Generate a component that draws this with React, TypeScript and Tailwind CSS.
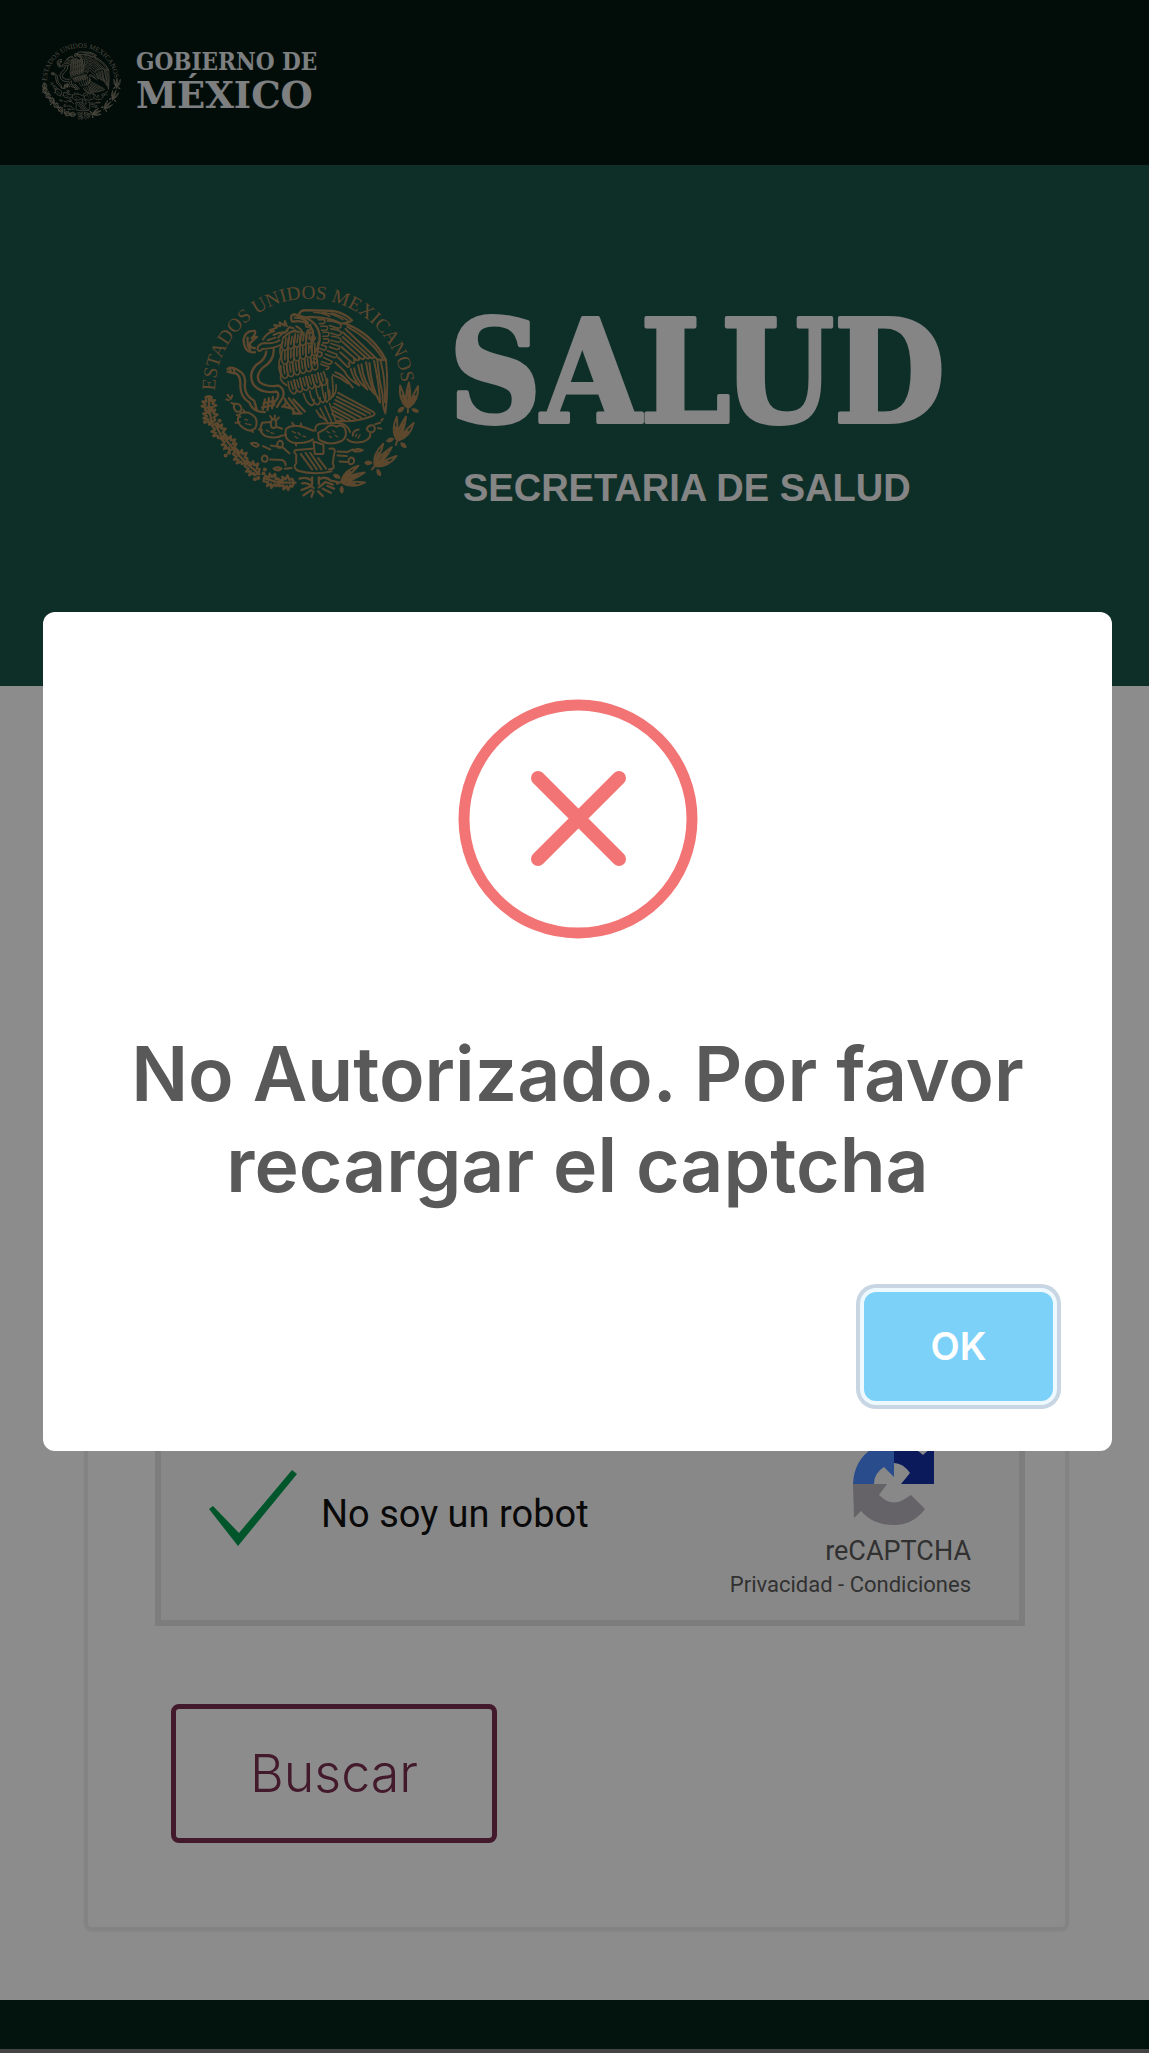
import React from "react";

const LEAF_LEFT: [number, number, number][] = [
  [68, 408, 0], [72, 440, -12], [98, 488, -28], [128, 524, -38], [164, 566, -44],
  [200, 600, -50], [258, 636, -72], [302, 642, -90],
];

const LEAF_RIGHT: [number, number, number][] = [
  [667, 385, 2], [645, 485, 20], [588, 568, 42], [495, 628, 68],
];

/* x start, y start, feather count for each row on the breast */
const BREAST_ROWS: [number, number, number][] = [
  [292, 204, 5], [288, 246, 6], [284, 290, 6], [306, 338, 6],
];

function Emblem({ id, title, className }: { id: string; title: string; className: string }) {
  return (
    <svg viewBox="30 30 680 670" role="img" aria-label={title} className={className} fill="none" stroke="currentColor" strokeLinecap="round" strokeLinejoin="round">
      <path id={id} d="M86 370 A281 281 0 0 1 648 370" stroke="none" />
      <text fill="currentColor" stroke="none" fontSize="58" fontFamily="'Liberation Serif', serif">
        <textPath href={`#${id}`} startOffset="4">ESTADOS UNIDOS MEXICANOS</textPath>
      </text>

      {/* wing outline and shoulder */}
      <g strokeWidth="7">
        <path d="M338 142 Q338 122 362 124 L440 126 Q474 132 498 154 Q484 164 464 164 Q440 150 404 146 L370 144 Q352 148 338 142" />
        <path d="M338 140 Q392 152 400 196 Q404 226 386 250" />
        <path d="M318 158 Q308 138 326 136 L338 140 M318 158 Q366 150 380 186 Q386 220 372 236 M326 146 Q352 146 364 160" />
        <path d="M478 164 Q560 196 600 274 L574 272" />
        <path d="M384 130 Q412 132 430 142 M408 130 Q442 134 470 152 M436 132 Q462 138 484 154" strokeWidth="5" />
      </g>

      {/* covert feathers on the wing */}
      <g strokeWidth="5">
        <path d="M366 162 q-12 4 -6 12 q12 2 14 -8 M376 180 q-14 2 -10 12 q12 4 16 -6 M384 202 q-14 2 -10 12 q12 2 14 -8" />
        <path d="M396 152 h18 q6 8 -2 12 h-12 M404 172 h18 q6 8 -2 12 h-14 M410 190 h16 q6 8 -2 12 h-14 M412 210 h14 q6 8 -2 12 h-14 M406 228 l14 4 q2 10 -6 12 l-14 -6 M394 246 l14 6 q0 10 -8 12 l-12 -8 M382 266 l12 8 q-2 10 -10 10 l-10 -8" />
        <path d="M424 156 q22 0 40 10 q4 10 -8 12 l-26 -8 M434 180 q18 0 30 8 q4 10 -8 12 l-22 -8 M436 202 q16 0 28 8 q2 10 -8 10 l-22 -6 M434 224 l26 8 q2 10 -8 10 l-22 -8 M424 246 l28 10 q2 10 -8 10 l-26 -10 M412 266 l26 12 q0 8 -10 8 l-22 -8 M404 286 l24 8 q0 8 -8 8" />
      </g>

      {/* primary flight feathers */}
      <g strokeWidth="6">
        <path d="M478 180 L574 272 M484 174 Q550 208 590 268 M470 190 L556 268 q8 4 6 -6 M470 204 L542 268 q8 4 8 -6 M468 218 L526 270 q10 4 8 -8 M466 234 L512 274 q10 2 6 -10 M462 250 L498 282 q10 2 6 -10 M456 266 L484 294 q10 2 4 -12 M448 282 L474 306" />
        <path d="M600 276 Q608 350 598 434 Q588 408 590 380 Q578 330 574 276" />
        <path d="M584 278 Q598 330 597 400 M564 276 Q580 350 582 402 Q556 358 550 282 M540 280 Q548 340 566 376 Q532 344 526 286 M516 288 Q524 330 544 362 Q508 334 504 298 M494 300 Q500 326 520 350 Q482 328 476 308 M448 310 Q476 320 500 356 M440 318 Q464 326 486 344" />
      </g>

      {/* breast and body feathers in scalloped rows */}
      <g strokeWidth="5">
        {BREAST_ROWS.map(([x, y, n], r) => (
          <g key={y}>
            {Array.from({ length: n }, (_, c) => (
              <path
                key={c}
                d="M0 0 q-6 28 3 38 q8 5 13 -4 q3 -12 1 -34 M8 2 v24"
                transform={`translate(${x + c * 18} ${y - c * 5}) rotate(${8 - r * 8})`}
              />
            ))}
          </g>
        ))}
        <path d="M290 220 Q276 240 284 262 Q272 290 284 318 Q278 336 302 350" />
        <path d="M352 374 q8 30 24 36 q10 -2 8 -18 M370 366 q8 36 24 42 q10 -4 8 -22 M388 352 q6 42 22 50 q12 -6 8 -30 M406 340 q4 50 16 60 q12 -10 8 -36 M424 330 q0 50 8 62 q12 -14 8 -44 M438 324 q4 40 2 60 q12 -14 10 -36" />
        <path d="M390 424 L404 446 M402 418 L424 460 M416 412 L436 458 M430 404 L450 460 M394 432 L420 456" />
      </g>

      {/* tail */}
      <g strokeWidth="6">
        <path d="M456 372 L556 426 Q572 434 562 440 Q510 462 452 456 M452 384 L552 434 M448 394 L538 440 M444 404 L524 446 M440 414 L508 450 M438 424 L490 452 M438 436 L474 454" />
      </g>

      {/* head and beak */}
      <g strokeWidth="6">
        <path d="M280 214 Q262 226 234 222 Q212 226 214 242 Q220 252 228 240 Q258 240 284 228" />
        <path d="M230 212 Q240 192 264 186 L250 184 L272 176 L264 168 L282 172 L280 160 L294 170 L296 156 L302 172" />
        <path d="M244 214 L268 206 M262 198 Q280 188 296 190 M276 206 Q288 190 304 186 M296 192 L310 174 L322 178 M292 206 Q306 190 328 184 M304 196 Q320 182 340 190 M330 172 Q348 180 352 200" />
      </g>

      {/* serpent */}
      <g strokeWidth="7">
        <path d="M206 186 Q176 184 172 212 Q174 254 206 250 M206 186 Q210 196 196 208 L212 204 L192 222 Q186 236 206 238 M184 206 Q182 234 192 242" />
        <path d="M240 248 Q238 272 210 288 Q184 316 202 348 Q226 376 270 368 Q280 372 274 388 L262 404" />
        <path d="M262 240 Q266 274 230 296 Q206 320 220 340 Q240 356 276 350 Q298 360 290 386 L272 414" />
        <path d="M124 300 Q134 292 152 302 Q180 316 176 344 Q172 378 204 396 L212 424 M124 308 Q136 312 150 314 Q164 324 162 350 Q162 384 190 402 Q200 430 236 430 M130 298 l4 12 M142 298 l2 14" />
        <path d="M236 392 l-6 30 M248 388 l-4 36 M260 384 l-2 34 M232 404 l30 -8 M228 416 l36 -8" />
        <path d="M296 390 Q306 404 288 414 M300 398 L326 432 M308 388 L342 432 M322 392 L356 428 M296 414 L322 420 M320 434 L346 434" />
      </g>

      {/* cactus pads */}
      <g strokeWidth="6">
        <path d="M146 404 q-8 14 4 24 q14 4 16 -8 q-2 -16 -20 -16 M124 378 l6 8 M120 392 l8 2 M138 380 l-4 10 M136 402 l6 4" />
        <path d="M162 434 Q144 460 172 478 Q196 494 208 476 Q220 446 188 432 Q174 428 162 434 M152 438 l10 6 M148 462 l12 -2 M172 424 l4 8 M200 490 l-2 -8" />
        <path d="M228 462 Q214 490 238 502 Q270 512 288 500 M228 462 L252 460 M260 450 q-10 10 -4 26 q12 6 14 -8 q2 -14 -10 -18 M252 442 l4 6 M266 440 v6 M278 446 l-6 6 M270 474 L288 480 M218 482 l10 2" />
        <path d="M300 480 Q290 512 322 522 Q360 526 380 512 M300 480 Q320 464 356 476 L382 486 M318 462 l6 10 M344 464 l2 8 M330 530 l-2 -8 M292 500 l8 -2" />
        <path d="M388 486 Q384 466 408 464 L460 462 Q486 468 492 490 M396 492 L398 512 Q428 534 468 516 Q486 502 476 478 Q464 464 452 474 Q432 462 418 480 L396 492" />
        <path d="M484 512 Q500 526 534 518 Q556 508 552 494 M500 500 Q500 484 518 482 M542 480 q4 12 18 10 q12 -8 2 -20 q-14 -4 -20 10 M568 466 l14 -4 M576 478 l10 2 M590 450 l-4 6" />
        <path d="M176 452 l8 2 M186 466 l8 2 M178 464 l4 2 M240 484 l8 4 M254 492 l8 2 M318 488 l10 4 M336 492 l6 6 M326 504 l8 4 M350 502 l8 2 M422 488 l8 4 M440 486 l6 4 M430 502 l6 4 M448 500 l6 4 M512 496 l-4 8 M522 498 l-6 10" strokeWidth="4" />
      </g>

      {/* stone, water and shells */}
      <g strokeWidth="6">
        <path d="M330 544 L378 540 M410 556 L386 556 L382 518 L412 528 L412 554 M430 540 Q452 536 444 556 L440 584 Q450 602 428 602 M330 544 Q318 546 330 558 L330 584 Q318 596 336 606 M334 606 Q386 620 436 608 M344 556 L378 602 M358 552 L392 602 M372 552 L406 602 M396 568 L420 600" />
        <path d="M194 524 Q210 518 218 530 Q208 540 194 524 M230 532 L252 542 M254 530 L290 536 L310 554 M280 516 q-12 8 -4 20 q14 4 14 -10 q0 -10 -10 -10 M234 560 q-12 6 -4 18 q14 4 14 -8 q0 -10 -10 -10 M252 572 L288 574 Q300 580 298 590 M262 600 Q272 592 286 600 Q276 610 262 600 M296 600 L316 598" />
        <path d="M502 546 Q512 536 530 544 Q516 552 502 546 M454 548 L484 550 L500 542 M454 560 L482 562 M494 566 q-12 8 -4 20 q14 2 14 -10 q0 -10 -10 -10 M460 578 L482 580" />
      </g>

      {/* oak branch */}
      <g strokeWidth="7">
        {LEAF_LEFT.map(([x, y, a], i) => (
          <path
            key={i}
            transform={`translate(${x} ${y}) rotate(${a})`}
            d="M0 26 V-20 M0 22 L-12 16 L-8 10 L-22 4 L-10 0 L-20 -10 L-8 -10 L-10 -24 L0 -26 M0 22 L12 16 L8 8 L22 2 L10 -4 L18 -14 L6 -12 L8 -24 L0 -26"
          />
        ))}
      </g>
      <g fill="currentColor" stroke="none">
        {[[56, 460], [70, 466], [100, 456], [98, 472], [118, 560], [128, 552], [148, 526], [146, 540], [206, 632], [216, 628], [236, 602], [232, 614]].map(([x, y]) => (
          <circle key={`${x}-${y}`} cx={x} cy={y} r="6" />
        ))}
      </g>

      {/* laurel branch */}
      <g strokeWidth="6">
        {LEAF_RIGHT.map(([x, y, a], i) => (
          <g key={i} transform={`translate(${x} ${y}) rotate(${a})`}>
            <path d="M0 32 Q-14 10 0 -44 Q12 8 0 32 M0 32 V-20 M-4 30 Q-30 8 -26 -34 Q-12 -6 -8 14 M-18 -4 L-6 26 M4 30 Q32 8 28 -34 Q12 -6 8 14 M20 -4 L8 26" />
            <path d="M-14 32 q-12 0 -14 12 q10 2 14 -12 M14 36 q12 -2 16 6 q-10 4 -16 -6 M0 36 v10" fill="currentColor" />
          </g>
        ))}
      </g>

      {/* ribbon */}
      <g strokeWidth="7">
        <path d="M340 630 Q360 624 374 634 M348 644 Q366 640 382 658 M346 664 L372 654 M352 680 L376 664 M376 684 L382 668 M378 626 V646 M398 626 V646 M402 630 Q420 622 434 636 L456 640 M398 656 L418 640 L440 648 M396 668 L410 682 M410 660 L434 672 M424 652 L444 660" />
      </g>
    </svg>
  );
}

function RecaptchaLogo() {
  return (
    <svg viewBox="0 0 82 82" aria-hidden="true" className="mr-9 size-[82px]">
      <path fill="#1431a7" d="M41 0 Q59 1 70 12 L81 2 V41 H48 L57 30 Q50 20 41 20 Z" />
      <path fill="#4c8aff" d="M0 41 Q1 17 20 5 Q29 0 41 0 V34 L31 24 Q21 30 21 41 Z" />
      <path fill="#b8b2bd" d="M0 41 H34 L26 52 Q38 64 50 57 L58 52 L72 66 Q60 82 41 82 Q20 82 8 68 L1 75 Z" />
    </svg>
  );
}

function Header() {
  return (
    <header className="flex h-[165px] items-center bg-[#051812] px-10 pb-1">
      <Emblem id="ring-header" title="Escudo Nacional" className="size-[82px] text-[#8a8472]" />
      <svg viewBox="0 0 200 90" role="img" aria-label="Gobierno de México" className="ml-3 h-[90px] w-[200px] overflow-visible" fill="#e4e8ec" fontWeight="700">
        <text x="2" y="34" fontSize="24" fontFamily="'DejaVu Serif Condensed', 'DejaVu Serif', serif">GOBIERNO DE</text>
        <text x="2" y="72" fontSize="37" fontFamily="'DejaVu Serif', serif">MÉXICO</text>
      </svg>
    </header>
  );
}

function Banner() {
  return (
    <section className="flex h-[521px] items-start justify-center bg-[#1b5449] pt-[114px]">
      <Emblem id="ring-banner" title="Escudo Nacional" className="h-[223px] w-[227px] text-[#a98354]" />
      <svg viewBox="0 0 510 250" role="img" aria-label="Salud, Secretaria de Salud" className="ml-5 h-[250px] w-[510px] overflow-visible" fill="#f2f2f2">
        <text x="6" y="143" fontSize="142" fontWeight="700" fontFamily="'DejaVu Serif Condensed', 'DejaVu Serif', serif" stroke="#f2f2f2" strokeWidth="4" strokeLinejoin="round">SALUD</text>
        <text x="20" y="222" fontSize="38" fontWeight="700" fontFamily="'Liberation Sans', sans-serif">SECRETARIA DE SALUD</text>
      </svg>
    </section>
  );
}

function Captcha() {
  return (
    <div className="flex h-[224px] justify-between border-[6px] border-[#e4e4e4] bg-[#f8f8f8] font-[Roboto,sans-serif]">
      <label className="ml-12 mt-15 flex h-[80px] items-center gap-6 text-[38px] text-[#111111]">
        <span className="relative flex">
          <input type="checkbox" defaultChecked className="absolute inset-0 size-full appearance-none" />
          <svg viewBox="0 0 88 76" aria-hidden="true" className="h-[76px] w-[88px]" fill="#009b4e">
            <path d="M0 39 L4 36 L30 63 L83 0 L88 4 L29 76 Z" />
          </svg>
        </span>
        <span className="pt-3">No soy un robot</span>
      </label>
      <div className="mr-12 mt-[35px] flex flex-col items-end text-[#5a5a5a]">
        <RecaptchaLogo />
        <span className="mt-2 text-[27px] leading-9">reCAPTCHA</span>
        <span className="text-[22px] leading-8">
          <a href="#privacidad">Privacidad</a> - <a href="#condiciones">Condiciones</a>
        </span>
      </div>
    </div>
  );
}

function ErrorDialog() {
  return (
    <div className="fixed inset-0 flex items-center bg-black/45 pl-[43px] pr-[37px] pt-[10px]">
      <div role="alertdialog" aria-modal="true" aria-labelledby="dialog-title" className="flex flex-1 flex-col rounded-xl bg-white px-[51px] pb-[50px] pt-[87px]">
        <svg viewBox="0 0 240 240" aria-hidden="true" className="size-[240px] self-center" fill="none" stroke="#f27474" strokeLinecap="round">
          <circle cx="120" cy="120" r="114" strokeWidth="11" />
          <path d="M80 79 L161 160 M161 79 L80 160" strokeWidth="14" />
        </svg>
        <h2 id="dialog-title" className="mt-[89px] text-center font-[Inter,sans-serif] text-[75px] font-semibold leading-[91px] text-[#595959]">
          No Autorizado. Por favor recargar el captcha
        </h2>
        <button type="button" className="mr-2 mt-[82px] h-[109px] w-[189px] self-end rounded-xl bg-[#7cd1f9] font-[Inter,sans-serif] text-[38px] font-semibold text-white ring-4 ring-[#c8d6e4] ring-offset-4 ring-offset-[#eef9ff]">
          OK
        </button>
      </div>
    </div>
  );
}

export default function App() {
  return (
    <div className="flex min-h-screen flex-col bg-white">
      <Header />
      <Banner />
      <main className="flex-1 px-[80px] pb-[68px] pt-16">
        <form className="ml-1 rounded-lg border-4 border-[#efefef] pb-[84px] pl-[67px] pr-[40px] pt-[648px] shadow-xs">
          <Captcha />
          <button type="button" className="ml-4 mt-[78px] h-[139px] w-[326px] rounded-lg border-[5px] border-[#7a2e50] font-[Inter,sans-serif] text-[52px] font-light text-[#7a2e50]">
            Buscar
          </button>
        </form>
      </main>
      <footer className="h-[53px] border-b-4 border-[#7c7c7c] bg-[#07241b]" />
      <ErrorDialog />
    </div>
  );
}
